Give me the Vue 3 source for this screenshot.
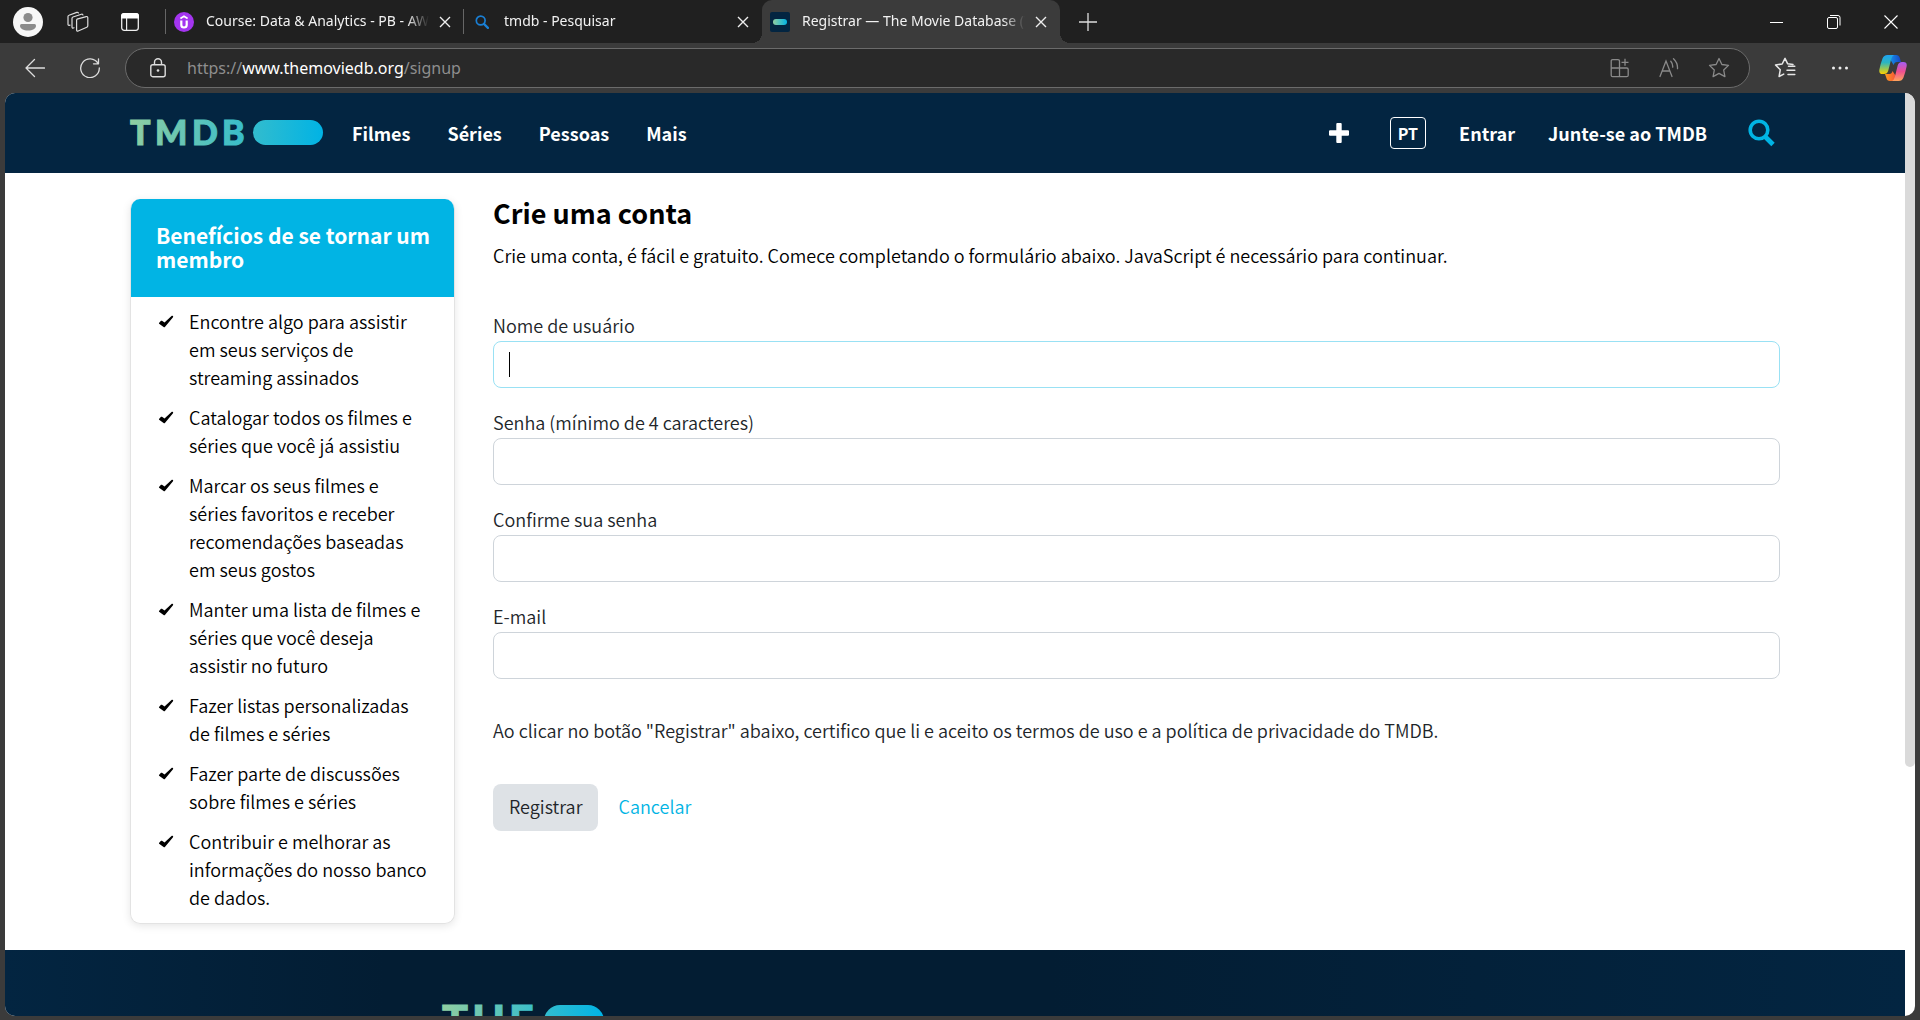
<script setup>
import { ref } from 'vue'

const tabs = [
  { id: 'course', title: 'Course: Data & Analytics - PB - AWS', active: false },
  { id: 'search', title: 'tmdb - Pesquisar', active: false },
  { id: 'tmdb', title: 'Registrar — The Movie Database (TMDB)', active: true },
]

const links = ['Filmes', 'Séries', 'Pessoas', 'Mais']

const benefits = [
  'Encontre algo para assistir em seus serviços de streaming assinados',
  'Catalogar todos os filmes e séries que você já assistiu',
  'Marcar os seus filmes e séries favoritos e receber recomendações baseadas em seus gostos',
  'Manter uma lista de filmes e séries que você deseja assistir no futuro',
  'Fazer listas personalizadas de filmes e séries',
  'Fazer parte de discussões sobre filmes e séries',
  'Contribuir e melhorar as informações do nosso banco de dados.',
]

const fields = ref([
  { id: 'username', label: 'Nome de usuário', type: 'text', value: '', current: true },
  { id: 'password', label: 'Senha (mínimo de 4 caracteres)', type: 'password', value: '' },
  { id: 'confirm', label: 'Confirme sua senha', type: 'password', value: '' },
  { id: 'email', label: 'E-mail', type: 'email', value: '' },
])
</script>

<template>
  <div class="window">
    <div class="tabstrip">
      <div class="strip-tools">
        <button class="bare" aria-label="Perfil">
          <svg width="30" height="30" viewBox="0 0 30 30">
            <circle cx="15" cy="15" r="15" fill="#f7f7f7" />
            <circle cx="15" cy="10.500" r="4.600" fill="#8b8b8b" />
            <path d="M8.500 17h13q1.500 0 1.500 1.500c0 3.200-3.400 5-8 5s-8-1.800-8-5q0-1.500 1.500-1.500z" fill="#8b8b8b" />
          </svg>
        </button>
        <button class="bare" aria-label="Workspaces">
          <svg width="22" height="22" viewBox="0 0 22 22" fill="none" stroke="#ddd" stroke-width="1.200" stroke-linejoin="round" stroke-linecap="round">
            <path d="M10 8.200l9.200-2.600q1.600-.4 1.600 1.200v8q0 1-1 1.400l-8.600 3.800q-1.600.6-1.600-1V9.500q0-1 .4-1.300z" />
            <path d="M7 16.800l-.6.200q-1.400.4-1.400-1V7.400q0-1 1-1.400l8.400-2.800q1.300-.4 1.500.8" />
            <path d="M3 14.200l-.8.200Q1 14.600 1 13.200V5.600q0-1 1-1.300l7.800-2.900q1.200-.4 1.600.6" />
          </svg>
        </button>
        <button class="bare" aria-label="Ações de guias">
          <svg width="18" height="18" viewBox="0 0 18 18">
            <rect x=".7" y=".7" width="16.600" height="16.600" rx="2.500" fill="none" stroke="#eee" stroke-width="1.300" />
            <path d="M0 5.600V3q0-3 3-3h12q3 0 3 3v2.600z" fill="#fff" />
            <path d="M5.600 5v12" stroke="#eee" stroke-width="1.200" />
          </svg>
        </button>
      </div>

      <div v-for="tab in tabs" :key="tab.id" class="tab" :class="{ active: tab.active }">
        <svg v-if="tab.id === 'course'" class="favicon" width="20" height="20" viewBox="0 0 20 20">
          <circle cx="10" cy="10" r="10" fill="#a435f0" />
          <path d="M7.300 8.500v4.500q0 2.500 2.700 2.500t2.700-2.500V8.500" fill="none" stroke="#fff" stroke-width="2.200" />
          <path d="M6.400 6.500L10 4.300l3.600 2.200" fill="none" stroke="#fff" stroke-width="1.600" />
        </svg>
        <svg v-else-if="tab.id === 'search'" class="favicon small" width="14" height="14" viewBox="0 0 14 14" fill="none" stroke="#1a7fd4">
          <circle cx="5.700" cy="5.500" r="4.400" stroke-width="1.700" />
          <path d="M8.900 8.900l4 4" stroke-width="2.200" stroke-linecap="round" />
        </svg>
        <svg v-else class="favicon" width="20" height="20" viewBox="0 0 20 20">
          <defs>
            <linearGradient id="fav"><stop offset="0" stop-color="#90cea1" /><stop offset="1" stop-color="#01b4e4" /></linearGradient>
          </defs>
          <rect width="20" height="20" rx="2" fill="#032541" />
          <rect x="3" y="7" width="14" height="6" rx="3" fill="url(#fav)" />
        </svg>
        <span class="tab-title">{{ tab.title }}</span>
        <button class="bare" aria-label="Fechar guia">
          <svg width="12" height="12" viewBox="0 0 12 12" stroke="#eee" stroke-width="1.400"><path d="M1 1l10 10M11 1L1 11" /></svg>
        </button>
      </div>
      <button class="bare new-tab" aria-label="Nova guia">
        <svg width="18" height="18" viewBox="0 0 18 18" stroke="#ddd" stroke-width="1.300"><path d="M9 0v18M0 9h18" /></svg>
      </button>
      <div class="window-controls">
        <button class="bare" aria-label="Minimizar">
          <svg width="14" height="14" viewBox="0 0 14 14"><path d="M0 7.500h13" stroke="#fff" /></svg>
        </button>
        <button class="bare" aria-label="Restaurar">
          <svg width="14" height="14" viewBox="0 0 14 14" fill="none" stroke="#fff"><rect x=".5" y="2.500" width="10" height="11" rx="1.500" /><path d="M3 .5h8q2 0 2 2v8" /></svg>
        </button>
        <button class="bare" aria-label="Fechar">
          <svg width="14" height="14" viewBox="0 0 14 14" stroke="#fff" stroke-width="1.100"><path d="M.5 .5l13 13M13.500 .5l-13 13" /></svg>
        </button>
      </div>
    </div>

    <div class="toolbar">
      <button class="bare" aria-label="Voltar">
        <svg width="20" height="20" viewBox="0 0 20 20" fill="none" stroke="#ddd" stroke-width="1.300" stroke-linecap="round" stroke-linejoin="round"><path d="M19.500 10H1M9.500 1.500L1 10l8.500 8.500" /></svg>
      </button>
      <button class="bare reload" aria-label="Atualizar">
        <svg width="20" height="20" viewBox="0 0 20 20" fill="none" stroke="#ddd" stroke-width="1.300" stroke-linecap="round" stroke-linejoin="round"><path d="M18 5.500A9.300 9.300 0 1 0 19.300 10M18.500 .8v5h-5" /></svg>
      </button>
      <div class="address">
        <svg class="lock" width="16" height="20" viewBox="0 0 16 20" fill="none" stroke="#ddd" stroke-width="1.400">
          <rect x=".8" y="6.700" width="14.400" height="12" rx="2" />
          <path d="M4.500 6.500V4.300a3.500 3.500 0 0 1 7 0v2.200" />
          <circle cx="8" cy="12.500" r="1.300" fill="#ddd" stroke="none" />
        </svg>
        <span class="url">https://<b>www.themoviedb.org</b>/signup</span>
        <div class="address-tools">
          <button class="bare" aria-label="Instalar aplicativo">
            <svg width="20" height="20" viewBox="0 0 20 20" fill="none" stroke="#8a8a8a" stroke-width="1.300">
              <path d="M9.500 10V3.200Q9.500 1.700 8 1.700H2.700Q1.200 1.700 1.200 3.200v14q0 1.500 1.500 1.500h14q1.500 0 1.500-1.500v-5.700q0-1.500-1.500-1.500H1.200M9.500 10v8.700M15 .8v7M11.500 4.300h7" />
            </svg>
          </button>
          <button class="bare" aria-label="Ler em voz alta">
            <svg width="20" height="20" viewBox="0 0 20 20" fill="none" stroke="#8a8a8a" stroke-width="1.300" stroke-linecap="round">
              <path d="M1 18.500L7 3l6 15.500M3.200 13h7.600M11.800 3.200q2.200 2.500 1.900 6M14.500 .8q4.400 4.200 4 9.800" />
            </svg>
          </button>
          <button class="bare" aria-label="Favoritar">
            <svg width="22" height="22" viewBox="0 0 22 22" fill="none" stroke="#8a8a8a" stroke-width="1.300" stroke-linejoin="round">
              <path d="M11 1.500l2.900 6 6.600.9-4.800 4.600 1.200 6.600-5.900-3.200-5.900 3.200 1.200-6.600L1.500 8.400l6.600-.9z" />
            </svg>
          </button>
        </div>
      </div>
      <button class="bare favorites" aria-label="Favoritos">
        <svg width="22" height="22" viewBox="0 0 22 22" fill="none" stroke="#e6e6e6" stroke-width="1.500" stroke-linejoin="round" stroke-linecap="round">
          <path d="M19 7.500l-5.300-.7L11 1.300 8.200 7l-6.700 1 4.800 4.700-1.200 6.800 4.600-2.400M14.500 9.300h6.300M13 13.300h7.800M14 17.500h6.800" />
        </svg>
      </button>
      <button class="bare dots" aria-label="Mais opções">
        <svg width="18" height="6" viewBox="0 0 18 6" fill="#eee"><circle cx="2.500" cy="3" r="1.500" /><circle cx="9" cy="3" r="1.500" /><circle cx="15.500" cy="3" r="1.500" /></svg>
      </button>
      <button class="bare" aria-label="Copilot">
        <svg width="28" height="28" viewBox="0 0 28 28">
          <defs>
            <linearGradient id="cpa" x1="0" y1="0" x2="0" y2="1"><stop offset="0" stop-color="#1fa3f2" /><stop offset=".4" stop-color="#2cb5c0" /><stop offset=".75" stop-color="#a3c94a" /><stop offset="1" stop-color="#ffd000" /></linearGradient>
            <linearGradient id="cpb" x1="0" y1="0" x2="0" y2="1"><stop offset="0" stop-color="#a35df5" /><stop offset=".5" stop-color="#ee4f91" /><stop offset="1" stop-color="#ffa45c" /></linearGradient>
            <linearGradient id="cpc"><stop offset="0" stop-color="#1790ea" /><stop offset="1" stop-color="#1745c4" /></linearGradient>
            <linearGradient id="cpd"><stop offset="0" stop-color="#ff9d1c" /><stop offset="1" stop-color="#f2503c" /></linearGradient>
          </defs>
          <path d="M11 1h6q3 0 3.800 3l1.200 4h-4q-2.500 0-3.400 3L11 5z" fill="url(#cpc)" />
          <path d="M17 27h-6q-3 0-3.600-3L6 20h4.500q2.300 0 3-3l4 6z" fill="url(#cpd)" />
          <path d="M8.500 1H15q-2 1-2.800 4L9.300 16.500Q8.400 20 5 20H3.500Q-.4 20 .4 15.500 1.600 9.500 3.500 4.500 4.800 1 8.500 1z" fill="url(#cpa)" />
          <path d="M19.500 27H13q2-1 2.800-4l2.900-11.500Q19.600 8 23 8h1.500q3.900 0 3.100 4.500-1.200 6-3.100 11-1.300 3.500-5 3.500z" fill="url(#cpb)" />
        </svg>
      </button>
    </div>

    <div class="viewport">
      <div class="page">
        <header class="site-header">
          <div class="container header-row">
            <a href="#" class="logo" aria-label="TMDB">
              <svg class="brand" width="194" height="26" viewBox="0 0 194 26">
                <defs>
                  <linearGradient id="logo" gradientUnits="userSpaceOnUse" x1="0" y1="0" x2="194" y2="0"><stop offset="0" stop-color="#90cea1" /><stop offset=".56" stop-color="#3cbec9" /><stop offset="1" stop-color="#00b3e5" /></linearGradient>
                </defs>
                <text class="mark" x="0 25 62 92" y="25" font-size="34" fill="url(#logo)" stroke="url(#logo)">TMDB</text>
                <rect x="123" y="0" width="70" height="25" rx="12.500" fill="url(#logo)" />
              </svg>
            </a>
            <nav class="links">
              <a v-for="link in links" :key="link" href="#">{{ link }}</a>
            </nav>
            <div class="actions">
              <a href="#" aria-label="Adicionar">
                <svg width="20" height="20" viewBox="0 0 20 20" fill="#fff"><path d="M7.300 1q0-1 1-1h3.400q1 0 1 1v6.300H19q1 0 1 1v3.400q0 1-1 1h-6.300V19q0 1-1 1H8.300q-1 0-1-1v-6.300H1q-1 0-1-1V8.300q0-1 1-1h6.300z" /></svg>
              </a>
              <button class="lang">PT</button>
              <a href="#">Entrar</a>
              <a href="#">Junte-se ao TMDB</a>
              <a href="#" class="find" aria-label="Pesquisar">
                <svg width="28" height="28" viewBox="0 0 28 28" fill="none" stroke="#01b4e4"><circle cx="11" cy="11" r="8.800" stroke-width="3.600" /><path d="M17 17.500l8 8" stroke-width="4.800" /></svg>
              </a>
            </div>
          </div>
        </header>

        <main class="container content">
          <aside class="card">
            <h3>Benefícios de se tornar um membro</h3>
            <ul>
              <li v-for="item in benefits" :key="item">
                <svg class="check" width="16" height="28" viewBox="0 0 16 28"><path d="M1 16l2-2.200q.5-.3 1 0l2.500 1.700 7.300-6.700q.7-.4 1.200.2.400.7 0 1.200L6.900 20q-.7.700-1.300 0l-4.500-3.300q-.3-.3-.1-.7z" /></svg>
                <span>{{ item }}</span>
              </li>
            </ul>
          </aside>

          <section class="signup">
            <h2>Crie uma conta</h2>
            <p class="intro">Crie uma conta, é fácil e gratuito. Comece completando o formulário abaixo. JavaScript é necessário para continuar.</p>
            <form @submit.prevent>
              <div v-for="field in fields" :key="field.id" class="field">
                <label :for="field.id">{{ field.label }}</label>
                <div class="control">
                  <input :id="field.id" v-model="field.value" :type="field.type" :class="{ current: field.current }" />
                  <span v-if="field.current" class="caret"></span>
                </div>
              </div>
              <p class="terms">Ao clicar no botão "Registrar" abaixo, certifico que li e aceito os termos de uso e a política de privacidade do TMDB.</p>
              <div class="buttons">
                <button type="submit" class="submit">Registrar</button>
                <a href="#">Cancelar</a>
              </div>
            </form>
          </section>
        </main>

        <footer class="site-footer">
          <svg class="brand" width="162" height="130" viewBox="0 0 162 130" aria-label="The Movie Database">
            <defs>
              <linearGradient id="foot" gradientUnits="userSpaceOnUse" x1="0" y1="0" x2="162" y2="0"><stop offset="0" stop-color="#90cea1" /><stop offset=".56" stop-color="#3cbec9" /><stop offset="1" stop-color="#00b3e5" /></linearGradient>
            </defs>
            <text class="mark" x="0 30 67" y="32" font-size="43" fill="url(#foot)" stroke="url(#foot)">THE</text>
            <rect x="102" y="0" width="60" height="32" rx="16" fill="url(#foot)" />
          </svg>
        </footer>
      </div>
      <div class="scrollbar"><div class="thumb"></div></div>
    </div>
  </div>
</template>

<style>
body {
  margin: 0;
  background: #3b3b3b;
}
</style>

<style scoped>
* {
  box-sizing: border-box;
}
.window {
  height: 100vh;
  display: flex;
  flex-direction: column;
  background: #3b3b3b;
  overflow: hidden;
  font-family: "Noto Sans", sans-serif;
}
svg {
  display: block;
  flex: none;
}
.brand {
  overflow: visible;
}
.bare {
  border: 0;
  padding: 0;
  background: none;
  flex: none;
}

/* browser tabs */
.tabstrip {
  flex: none;
  height: 43px;
  display: flex;
  align-items: center;
  background: #202020;
  padding-left: 13px;
}
.strip-tools {
  width: 153px;
  flex: none;
  display: flex;
  align-items: center;
  gap: 24px;
}
.strip-tools .bare:last-child {
  margin-left: 8px;
}
.tab {
  position: relative;
  width: 298px;
  height: 43px;
  display: flex;
  align-items: center;
  padding: 0 13px 0 8px;
  color: #f2f2f2;
  font-size: 14px;
}
.tab:not(.active)::before {
  content: "";
  position: absolute;
  left: -1px;
  top: 9px;
  width: 1px;
  height: 25px;
  background: #666;
}
.tab.active {
  background: #3b3b3b;
  border-radius: 10px 10px 0 0;
}
.tab.active::before,
.tab.active::after {
  content: "";
  position: absolute;
  bottom: 0;
  width: 10px;
  height: 10px;
}
.tab.active::before {
  right: 100%;
  background: radial-gradient(circle at 0 0, #202020 10px, #3b3b3b 10px);
}
.tab.active::after {
  left: 100%;
  background: radial-gradient(circle at 100% 0, #202020 10px, #3b3b3b 10px);
}
.favicon.small {
  margin: 0 3px;
}
.tab-title {
  flex: 1;
  min-width: 0;
  margin: 0 10px 2px 12px;
  white-space: nowrap;
  overflow: hidden;
  mask-image: linear-gradient(90deg, #000 calc(100% - 22px), transparent);
}
.new-tab {
  margin-left: 19px;
}
.window-controls {
  margin-left: auto;
  display: flex;
  gap: 43px;
  padding-right: 22px;
}

/* browser toolbar */
.toolbar {
  flex: none;
  height: 50px;
  display: flex;
  align-items: center;
  padding: 0 13px 0 25px;
}
.reload {
  margin-left: 35px;
}
.address {
  flex: 1;
  height: 40px;
  margin-left: 25px;
  padding: 0 19px 0 24px;
  display: flex;
  align-items: center;
  background: #292929;
  border: 1px solid #6b6b6b;
  border-radius: 20px;
}
.url {
  margin-left: 21px;
  color: #8e8e8e;
  font-size: 16px;
  line-height: 24px;
}
.url b {
  color: #fff;
  font-weight: 400;
}
.address-tools {
  margin-left: auto;
  display: flex;
  align-items: center;
  gap: 29px;
}
.favorites {
  margin-left: 24px;
}
.dots {
  margin: 0 30px 0 35px;
}

/* page */
.viewport {
  flex: 1;
  min-height: 0;
  margin: 0 5px 4px;
  display: flex;
  background: #fff;
  border-radius: 10px;
  overflow: hidden;
}
.page {
  flex: 1;
  min-width: 0;
  overflow: hidden;
  color: #000;
  font-family: "Noto Sans CJK SC", "Noto Sans", sans-serif;
  font-size: 18px;
  font-weight: 350;
  line-height: 28px;
}
.scrollbar {
  width: 10px;
  flex: none;
}
.thumb {
  height: 73%;
  background: #dadada;
  border-radius: 0 0 5px 5px;
}
.container {
  max-width: 1750px;
  margin: 0 auto;
  padding: 0 50px;
}
.mark {
  font-family: Lato, sans-serif;
  font-weight: 900;
}
.site-header {
  background: #032541;
}
.header-row {
  height: 80px;
  display: flex;
  align-items: center;
  font-weight: 700;
}
.header-row a {
  color: #fff;
  text-decoration: none;
}
.links {
  margin-left: 28px;
  display: flex;
  gap: 37px;
}
.actions {
  margin-left: auto;
  padding-right: 4px;
  display: flex;
  align-items: center;
  gap: 33px;
}
.lang {
  height: 32px;
  margin-left: 8px;
  padding: 0 7px;
  border: 1px solid #fff;
  border-radius: 4px;
  background: none;
  color: #fff;
  font: inherit;
  font-size: 16px;
}
.find {
  margin-left: 8px;
}
.content {
  display: flex;
  align-items: flex-start;
  gap: 38px;
  padding-top: 26px;
  padding-bottom: 26px;
}
.card {
  flex: none;
  width: 325px;
  border: 1px solid #e3e3e3;
  border-top: 0;
  border-radius: 10px;
  box-shadow: 0 2px 8px rgba(0, 0, 0, 0.1);
  overflow: hidden;
}
.card h3 {
  margin: 0;
  padding: 24px 20px 26px 25px;
  background: #01b4e4;
  color: #fff;
  font-size: 21px;
  line-height: 24px;
}
.card ul {
  list-style: none;
  margin: 0;
  padding: 10px 25px 12px 27px;
  display: flex;
  flex-direction: column;
  gap: 12px;
}
.card li {
  display: flex;
  gap: 15px;
}
.signup {
  flex: 1;
  min-width: 0;
}
.signup h2 {
  margin: 0;
  font-size: 27px;
  line-height: 28px;
}
.intro {
  margin: 14px 0 42px;
}
.field {
  margin-bottom: 20px;
  color: #212529;
}
.field label {
  display: block;
  margin-bottom: 2px;
}
.control {
  position: relative;
}
.control input {
  display: block;
  width: 100%;
  height: 47px;
  padding: 0 15px;
  border: 1px solid #ced4da;
  border-radius: 8px;
  background: #fff;
  font: inherit;
  outline: 0;
}
.control input.current {
  border-color: #99e1f4;
}
.caret {
  position: absolute;
  left: 16px;
  top: 11px;
  width: 1px;
  height: 25px;
  background: #000;
}
.terms {
  margin: 37px 0 40px;
  color: #212529;
}
.buttons {
  display: flex;
  align-items: center;
  gap: 20px;
}
.submit {
  height: 47px;
  padding: 0 16px 3px;
  border: 0;
  border-radius: 8px;
  background: #dee2e6;
  color: #212529;
  font: inherit;
}
.buttons a {
  padding-bottom: 3px;
  color: #01b4e4;
  text-decoration: none;
}
.site-footer {
  padding: 55px 0 80px 23%;
  background: linear-gradient(90deg, #032541, #031d33 20%, #031d33 55%, #032541);
}
</style>
